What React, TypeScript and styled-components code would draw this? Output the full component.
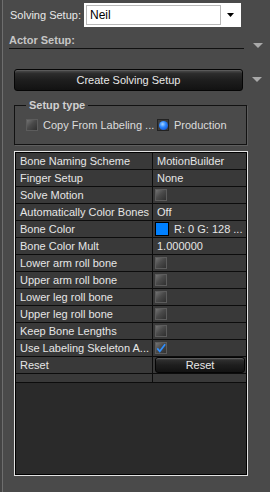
import React from "react";
import styled, { createGlobalStyle } from "styled-components";

const Global = createGlobalStyle`
  html, body { margin: 0; padding: 0; background: #4a4a4a; }
  body { font-family: "Liberation Sans", Arial, sans-serif; font-size: 11px; color: #e4e4e4; }
  * { box-sizing: border-box; }
`;

const Panel = styled.div`
  width: 270px;
  height: 492px;
  background: #4a4a4a;
  border-left: 2px solid #444;
  position: relative;
  display: flex;
  flex-direction: column;
  padding: 3px 0 0 0;
  &::before {
    content: "";
    position: absolute;
    left: 0;
    top: 0;
    bottom: 0;
    width: 1px;
    background: #6e6e6e;
  }
`;

const TopRow = styled.div`
  display: flex;
  align-items: center;
  height: 24px;
  padding-left: 8px;
`;

const Label = styled.span`
  width: 74px;
  color: #e8e8e8;
  font-size: 11px;
`;

const Select = styled.div`
  width: 157px;
  height: 24px;
  background: #fff;
  padding: 2px;
  display: flex;
`;

const SelectField = styled.div`
  flex: 1;
  border: 1px solid #b8b8b8;
  color: #000;
  font-size: 12px;
  display: flex;
  align-items: center;
  padding-left: 3px;
`;

const SelectArrow = styled.div`
  width: 18px;
  display: flex;
  align-items: center;
  justify-content: center;
`;

const HeaderBlock = styled.div`
  display: flex;
  align-items: flex-end;
  margin-top: 7px;
  padding-left: 7px;
`;

const HeaderMain = styled.div`
  width: 235px;
  display: flex;
  flex-direction: column;
`;

const HeaderTitle = styled.div`
  font-weight: bold;
  color: #c6c6c6;
  font-size: 11px;
  line-height: 13px;
  height: 13px;
`;

const HeaderLine = styled.div`
  margin-top: 1px;
  border-top: 1px solid #111;
`;

const SideArrow = styled.div`
  margin-left: 9px;
  display: flex;
  align-items: flex-end;
  padding-bottom: 1px;
`;

const ButtonRow = styled.div`
  display: flex;
  align-items: center;
  margin-top: 20px;
  padding-left: 12px;
`;

const DarkButton = styled.div<{ $w: number; $h: number }>`
  width: ${(p) => p.$w}px;
  height: ${(p) => p.$h}px;
  border: 1px solid #050505;
  border-radius: 3px;
  background: linear-gradient(#505050 0%, #2c2c2c 18%, #1e1e1e 50%, #121212 100%);
  box-shadow: inset 0 1px 0 #5a5a5a;
  color: #e8e8e8;
  font-size: 11px;
  display: flex;
  align-items: center;
  justify-content: center;
`;

const Group = styled.fieldset`
  margin: 8px 0 0 12px;
  width: 233px;
  border: 1px solid #121212;
  box-shadow: 1px 1px 0 #5e5e5e;
  padding: 6px 0 12px 11px;
`;

const Legend = styled.legend`
  font-weight: bold;
  color: #d0d0d0;
  font-size: 11px;
  line-height: 13px;
  padding: 0 3px;
  margin-left: 0;
`;

const OptionRow = styled.div`
  display: flex;
  align-items: center;
  height: 14px;
`;

const Option = styled.div<{ $w?: number }>`
  display: flex;
  align-items: center;
  gap: 5px;
  width: ${(p) => (p.$w ? `${p.$w}px` : "auto")};
  color: #dcdcdc;
  font-size: 11px;
  white-space: nowrap;
`;

const Check = styled.div`
  width: 12px;
  height: 12px;
  border: 1px solid #5c5c5c;
  background: linear-gradient(135deg, #727272 0%, #4a4a4a 45%, #303030 100%);
  display: flex;
  align-items: center;
  justify-content: center;
  flex-shrink: 0;
`;

const Radio = styled.div`
  width: 12px;
  height: 12px;
  border: 1px solid #222;
  background: #3c3c3c;
  display: flex;
  align-items: center;
  justify-content: center;
  &::after {
    content: "";
    width: 9px;
    height: 9px;
    border-radius: 50%;
    background: radial-gradient(circle at 40% 35%, #a8d4ff 0%, #2b86ff 40%, #0a3fc0 100%);
  }
`;

const Table = styled.div`
  margin: 6px 0 0 12px;
  width: 234px;
  height: 325px;
  border: 1px solid #e2e2e2;
  display: flex;
`;

const TableInner = styled.div`
  flex: 1;
  border: 1px solid #000;
  background: #2a2a2a;
  display: flex;
  flex-direction: column;
`;

const Row = styled.div<{ $short?: boolean }>`
  display: grid;
  grid-template-columns: 137px 1fr;
  height: ${(p) => (p.$short ? 9 : 17)}px;
  border-bottom: 1px solid #0c0c0c;
  background: #393939;
`;

const NameCell = styled.div`
  border-right: 1px solid #0c0c0c;
  padding-left: 4px;
  display: flex;
  align-items: center;
  color: #e6e6e6;
  font-size: 11px;
  white-space: nowrap;
  overflow: hidden;
`;

const ValueCell = styled.div`
  padding-left: 2px;
  display: flex;
  align-items: center;
  gap: 5px;
  color: #e6e6e6;
  font-size: 11px;
  white-space: nowrap;
  overflow: hidden;
`;

const ValueText = styled.span`
  padding-left: 2px;
`;

const Swatch = styled.div`
  width: 14px;
  height: 14px;
  border: 1px solid #000;
  background: #0080ff;
  flex-shrink: 0;
`;

const Triangle = ({ color = "#a9a9a9", w = 10, h = 5 }: { color?: string; w?: number; h?: number }) => (
  <svg width={w} height={h} viewBox={`0 0 ${w} ${h}`}>
    <polygon points={`0,0 ${w},0 ${w / 2},${h}`} fill={color} />
  </svg>
);

const CheckMark = () => (
  <svg width="12" height="12" viewBox="0 0 12 12">
    <path d="M1.5 6.5 L4.5 10 L11 1.5" fill="none" stroke="#2f8fff" strokeWidth="2" />
  </svg>
);

type RowData = { name: string; kind: "text" | "check" | "checked" | "color" | "button"; value?: string };

const rows: RowData[] = [
  { name: "Bone Naming Scheme", kind: "text", value: "MotionBuilder" },
  { name: "Finger Setup", kind: "text", value: "None" },
  { name: "Solve Motion", kind: "check" },
  { name: "Automatically Color Bones", kind: "text", value: "Off" },
  { name: "Bone Color", kind: "color", value: "R: 0 G: 128 ..." },
  { name: "Bone Color Mult", kind: "text", value: "1.000000" },
  { name: "Lower arm roll bone", kind: "check" },
  { name: "Upper arm roll bone", kind: "check" },
  { name: "Lower leg roll bone", kind: "check" },
  { name: "Upper leg roll bone", kind: "check" },
  { name: "Keep Bone Lengths", kind: "check" },
  { name: "Use Labeling Skeleton A...", kind: "checked" },
  { name: "Reset", kind: "button" },
];

const renderValue = (r: RowData) => {
  switch (r.kind) {
    case "text":
      return <ValueText>{r.value}</ValueText>;
    case "check":
      return <Check />;
    case "checked":
      return (
        <Check>
          <CheckMark />
        </Check>
      );
    case "color":
      return (
        <>
          <Swatch />
          <span>{r.value}</span>
        </>
      );
    case "button":
      return (
        <DarkButton $w={90} $h={16}>
          Reset
        </DarkButton>
      );
  }
};

export default function App() {
  return (
    <>
      <Global />
      <Panel>
        <TopRow>
          <Label>Solving Setup:</Label>
          <Select>
            <SelectField>Neil</SelectField>
            <SelectArrow>
              <Triangle color="#000" w={7} h={4} />
            </SelectArrow>
          </Select>
        </TopRow>

        <HeaderBlock>
          <HeaderMain>
            <HeaderTitle>Actor Setup:</HeaderTitle>
            <HeaderLine />
          </HeaderMain>
          <SideArrow>
            <Triangle />
          </SideArrow>
        </HeaderBlock>

        <ButtonRow>
          <DarkButton $w={229} $h={22}>Create Solving Setup</DarkButton>
          <SideArrow>
            <Triangle />
          </SideArrow>
        </ButtonRow>

        <Group>
          <Legend>Setup type</Legend>
          <OptionRow>
            <Option $w={131}>
              <Check />
              <span>Copy From Labeling ...</span>
            </Option>
            <Option>
              <Radio />
              <span>Production</span>
            </Option>
          </OptionRow>
        </Group>

        <Table>
          <TableInner>
            {rows.map((r) => (
              <Row key={r.name}>
                <NameCell>{r.name}</NameCell>
                <ValueCell>{renderValue(r)}</ValueCell>
              </Row>
            ))}
            <Row $short>
              <NameCell />
              <ValueCell />
            </Row>
          </TableInner>
        </Table>
      </Panel>
    </>
  );
}
